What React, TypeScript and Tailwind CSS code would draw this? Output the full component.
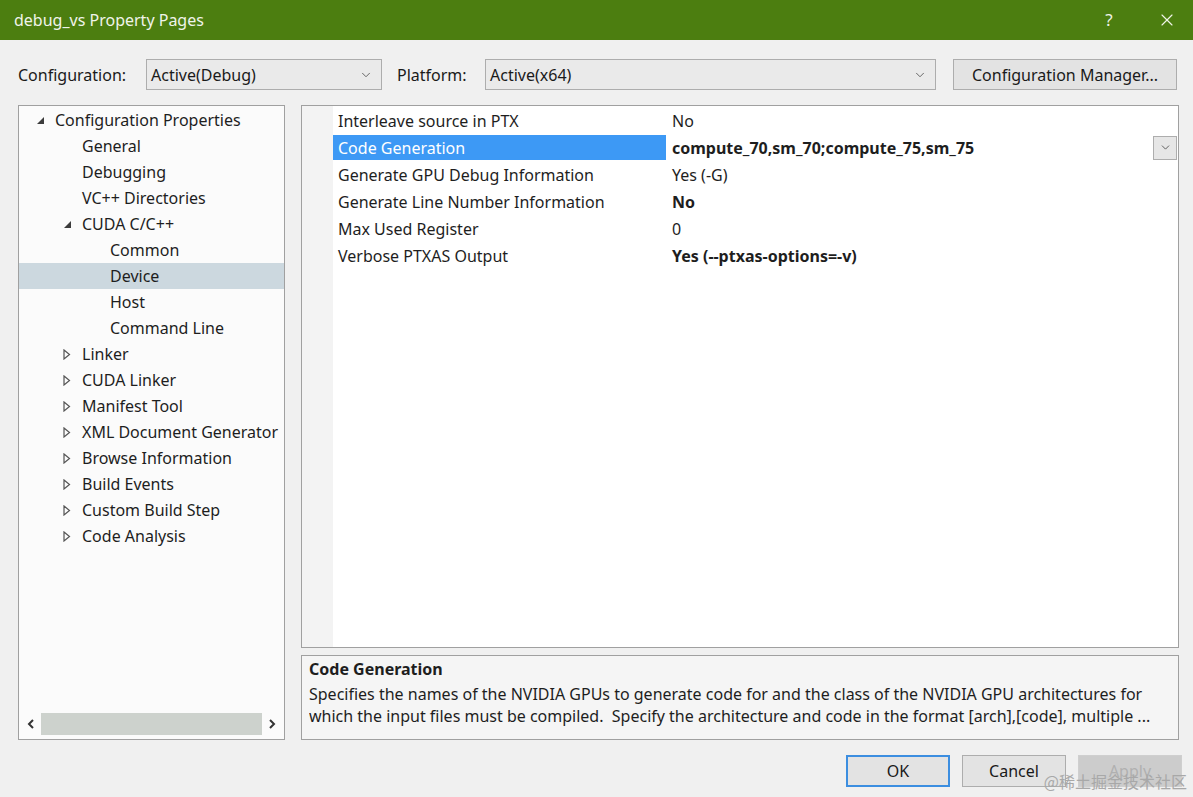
import { ChevronDown, X } from 'lucide-react'

const FONT = { fontFamily: '"Noto Sans", "Open Sans", "Noto Sans CJK SC", sans-serif' }

type TreeItem = { label: string; level: number; arrow?: 'open' | 'closed'; selected?: boolean }

const tree: TreeItem[] = [
  { label: 'Configuration Properties', level: 0, arrow: 'open' },
  { label: 'General', level: 1 },
  { label: 'Debugging', level: 1 },
  { label: 'VC++ Directories', level: 1 },
  { label: 'CUDA C/C++', level: 1, arrow: 'open' },
  { label: 'Common', level: 2 },
  { label: 'Device', level: 2, selected: true },
  { label: 'Host', level: 2 },
  { label: 'Command Line', level: 2 },
  { label: 'Linker', level: 1, arrow: 'closed' },
  { label: 'CUDA Linker', level: 1, arrow: 'closed' },
  { label: 'Manifest Tool', level: 1, arrow: 'closed' },
  { label: 'XML Document Generator', level: 1, arrow: 'closed' },
  { label: 'Browse Information', level: 1, arrow: 'closed' },
  { label: 'Build Events', level: 1, arrow: 'closed' },
  { label: 'Custom Build Step', level: 1, arrow: 'closed' },
  { label: 'Code Analysis', level: 1, arrow: 'closed' },
]

const props = [
  { name: 'Interleave source in PTX', value: 'No', bold: false },
  { name: 'Code Generation', value: 'compute_70,sm_70;compute_75,sm_75', bold: true, selected: true },
  { name: 'Generate GPU Debug Information', value: 'Yes (-G)', bold: false },
  { name: 'Generate Line Number Information', value: 'No', bold: true },
  { name: 'Max Used Register', value: '0', bold: false },
  { name: 'Verbose PTXAS Output', value: 'Yes (--ptxas-options=-v)', bold: true },
]

function Arrow({ kind }: { kind?: 'open' | 'closed' }) {
  if (!kind) return <span className="w-[19px] shrink-0" />
  if (kind === 'open')
    return (
      <span className="w-[19px] shrink-0 flex items-center">
        <svg width="9" height="9" viewBox="0 0 9 9">
          <path d="M8 1 L8 8 L1 8 Z" fill="#3c3c3c" />
        </svg>
      </span>
    )
  return (
    <span className="w-[19px] shrink-0 flex items-center">
      <svg width="8" height="11" viewBox="0 0 8 11">
        <path d="M1 1 L6.5 5.5 L1 10 Z" fill="none" stroke="#555" strokeWidth="1.2" />
      </svg>
    </span>
  )
}

function Combo({ text, width }: { text: string; width: string }) {
  return (
    <div className={`${width} h-[31px] flex items-center justify-between border border-[#adadad] bg-[#eaeaea] pl-[4px] pr-[8px]`}>
      <span className="text-[16px] text-[#1a1a1a]">{text}</span>
      <ChevronDown size={14} strokeWidth={1.5} className="text-[#555]" />
    </div>
  )
}

function Btn({ text, primary, disabled }: { text: string; primary?: boolean; disabled?: boolean }) {
  return (
    <div
      className={`w-[104px] h-[32px] flex items-center justify-center text-[16px] ${
        primary
          ? 'border-2 border-[#3c8ee0] bg-[#e3e3e3] text-[#1a1a1a]'
          : disabled
            ? 'border border-[#cfcfcf] bg-[#cccccc] text-[#b0b0b0]'
            : 'border border-[#adadad] bg-[#e3e3e3] text-[#1a1a1a]'
      }`}
    >
      {text}
    </div>
  )
}

export default function App() {
  return (
    <div className="w-[1193px] h-[797px] bg-[#f0f0f0] flex flex-col overflow-hidden relative" style={FONT}>
      <div className="h-[40px] bg-[#4c7e10] flex items-center justify-between shrink-0">
        <span className="pl-[14px] text-[16px] text-[#f0f4ea]">debug_vs Property Pages</span>
        <div className="flex items-center">
          <span className="w-[40px] text-center text-[17px] text-[#eef3e6] mr-[12px]">?</span>
          <span className="w-[52px] flex justify-center">
            <X size={20} strokeWidth={1.4} className="text-[#eef3e6]" />
          </span>
        </div>
      </div>

      <div className="flex items-center h-[31px] mt-[19px] pl-[18px] text-[16px] text-[#1a1a1a]">
        <span className="w-[128px]">Configuration:</span>
        <Combo text="Active(Debug)" width="w-[236px]" />
        <span className="ml-[15px] w-[88px]">Platform:</span>
        <Combo text="Active(x64)" width="w-[451px]" />
        <div className="ml-[17px] w-[224px] h-[31px] border border-[#adadad] bg-[#e3e3e3] flex items-center justify-center">
          Configuration Manager...
        </div>
      </div>

      <div className="flex mt-[15px] pl-[18px] gap-[16px] h-[635px]">
        <div className="w-[267px] border border-[#a0a0a0] bg-[#fbfbfb] flex flex-col">
          <div className="flex-1 pt-[1px] overflow-hidden">
            {tree.map((t) => (
              <div
                key={t.label}
                className={`h-[26px] flex items-center whitespace-nowrap text-[16px] text-[#1e1e1e] ${t.selected ? 'bg-[#ccd8df]' : ''}`}
                style={{ paddingLeft: 17 + t.level * 27 + (t.level === 2 ? 1 : 0) }}
              >
                <Arrow kind={t.arrow} />
                <span>{t.label}</span>
              </div>
            ))}
          </div>
          <div className="h-[22px] mb-[4px] flex items-center px-[6px] gap-[4px]">
            <svg width="12" height="12" viewBox="0 0 12 12" className="shrink-0">
              <path d="M8 2 L4 6 L8 10" fill="none" stroke="#333" strokeWidth="2" />
            </svg>
            <div className="flex-1 h-[22px] bg-[#cdd2cd]" />
            <svg width="12" height="12" viewBox="0 0 12 12" className="shrink-0">
              <path d="M4 2 L8 6 L4 10" fill="none" stroke="#333" strokeWidth="2" />
            </svg>
          </div>
        </div>

        <div className="w-[878px] flex flex-col gap-[7px]">
          <div className="h-[543px] border border-[#a0a0a0] bg-white flex">
            <div className="w-[31px] bg-[#f3f3f3] shrink-0" />
            <div className="flex-1 pt-[1px] pr-[1px]">
              {props.map((p) => (
                <div key={p.name} className="h-[27px] flex items-center text-[16px]">
                  <div
                    className={`w-[333px] h-[25px] flex items-center pl-[5px] ${p.selected ? 'bg-[#3d99f5] text-white' : 'text-[#1e1e1e]'}`}
                  >
                    {p.name}
                  </div>
                  <div className={`flex-1 pl-[6px] text-[#1e1e1e] ${p.bold ? 'font-bold' : ''}`}>{p.value}</div>
                  {p.selected ? (
                    <div className="w-[24px] h-[24px] border border-[#adadad] bg-[#e6e6e6] flex items-center justify-center">
                      <ChevronDown size={13} strokeWidth={1.5} className="text-[#444]" />
                    </div>
                  ) : null}
                </div>
              ))}
            </div>
          </div>
          <div className="h-[85px] border border-[#a0a0a0] bg-[#f5f5f5] px-[7px] pt-[1px] text-[#1e1e1e]">
            <div className="text-[16px] font-bold leading-[24px]">Code Generation</div>
            <div className="text-[16px] leading-[22px] mt-[2px] whitespace-nowrap overflow-hidden">
              Specifies the names of the NVIDIA GPUs to generate code for and the class of the NVIDIA GPU architectures for
              <br />
              which the input files must be compiled.&nbsp; Specify the architecture and code in the format [arch],[code], multiple ...
            </div>
          </div>
        </div>
      </div>

      <div className="flex justify-end gap-[12px] pr-[11px] mt-[15px]">
        <Btn text="OK" primary />
        <Btn text="Cancel" />
        <Btn text="Apply" disabled />
      </div>

      <div className="absolute right-[6px] bottom-[4px] text-[16px] text-[#a8a8a8]" style={{ fontFamily: '"Noto Sans CJK SC", sans-serif' }}>
        @稀土掘金技术社区
      </div>
    </div>
  )
}
